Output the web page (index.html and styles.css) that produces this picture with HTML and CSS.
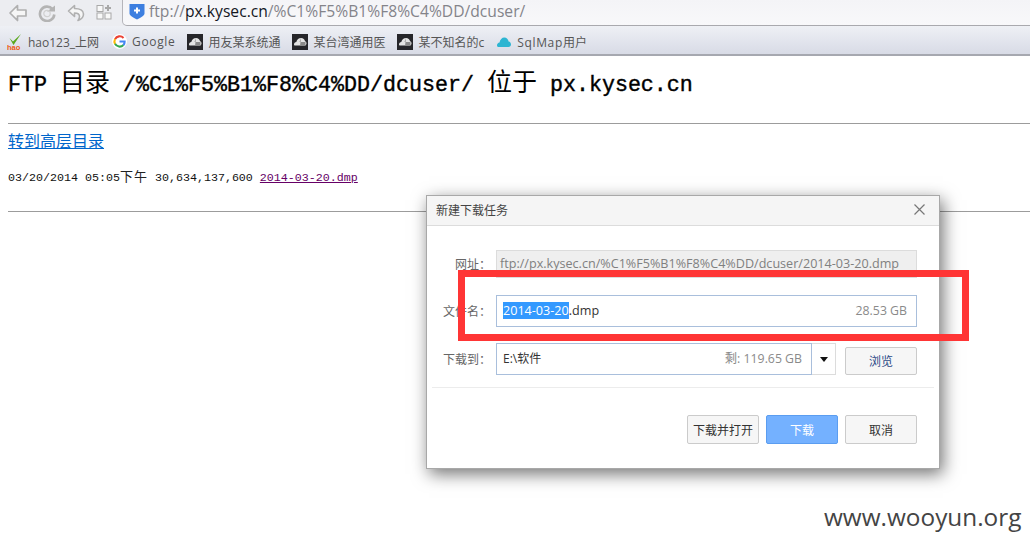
FILE: index.html
```html
<!DOCTYPE html>
<html lang="zh">
<head>
<meta charset="utf-8">
<title>FTP</title>
<link rel="stylesheet" href="styles.css">
</head>
<body>
<header class="chrome">
  <div class="toolbar">
    <div class="nav">
      <svg class="nav-icon" width="18" height="18" viewBox="0 0 18 18"><path d="M8.500 1.500 1 9l7.500 7.500V12H17V6H8.500z" fill="#f6f6f6" stroke="#b0b0b0" stroke-width="1.700" stroke-linejoin="round"/></svg>
      <svg class="nav-icon" width="18" height="18" viewBox="0 0 18 18"><path d="M14.500 5A7.200 7.200 0 1 0 16.300 10.500" fill="none" stroke="#b4b4b4" stroke-width="2.600"/><path d="M9 7.500h8V1.500z" fill="#b4b4b4"/><circle cx="9" cy="9.500" r="3.200" fill="none" stroke="#d0d0d0" stroke-width="1.200"/></svg>
      <svg class="nav-icon" width="18" height="18" viewBox="0 0 18 18"><path d="M7.500 1.500 1.500 7l6 5.500V9c3.500 0 5 1.500 5 3.500 0 1.500-.8 3-1.500 4 3-1 5.500-3.500 5.500-6.500 0-3.500-3.500-5.500-9-5.500z" fill="#f6f6f6" stroke="#b0b0b0" stroke-width="1.600" stroke-linejoin="round"/></svg>
      <svg class="nav-icon" width="16" height="16" viewBox="0 0 16 16"><rect x="1" y="1.500" width="6" height="6" fill="#f8f8f8" stroke="#a8a8a8"/><rect x="1" y="9" width="6" height="6" fill="#f8f8f8" stroke="#a8a8a8"/><rect x="9" y="9" width="6" height="6" fill="#f8f8f8" stroke="#a8a8a8"/><path d="M12 1v6M9 4h6" stroke="#a8a8a8" stroke-width="2"/></svg>
    </div>
    <div class="address">
      <svg width="16" height="17" viewBox="0 0 16 17"><path d="M.5 1h15v9.500c0 2-3.500 4.200-7.500 6-4-1.800-7.500-4-7.500-6z" fill="#3d7fe0"/><path d="M8 4.500v6M5 7.500h6" stroke="#fff" stroke-width="2"/></svg>
      <span class="url">ftp://<b>px.kysec.cn</b>/%C1%F5%B1%F8%C4%DD/dcuser/</span>
    </div>
  </div>
  <nav class="bookmarks">
    <span class="bm">
      <svg width="16" height="16" viewBox="0 0 16 16"><path d="M2.500 4 6 7.500 14 0 6.500 11z" fill="#5aa81e"/><text x="0" y="15.500" class="hao">hao</text></svg>
      hao123_上网</span>
    <span class="bm">
      <svg width="15" height="15" viewBox="0 0 16 16"><circle cx="8" cy="8" r="8" fill="#fff"/><path d="M12.300 4.200A5.700 5.700 0 0 0 3.200 5.500" fill="none" stroke="#ea4335" stroke-width="2.200"/><path d="M3.200 5.500a5.700 5.700 0 0 0 0 5" fill="none" stroke="#fbbc05" stroke-width="2.200"/><path d="M3.200 10.500a5.700 5.700 0 0 0 9 1.300" fill="none" stroke="#34a853" stroke-width="2.200"/><path d="M8 8h5.500a5.700 5.700 0 0 1-1.300 3.800" fill="none" stroke="#4285f4" stroke-width="2.200"/></svg>
      <span class="wide">Google</span></span>
    <span class="bm">
      <svg class="cloud" width="16" height="16" viewBox="0 0 16 16"><rect width="16" height="16" fill="#26262a"/><path d="M2 10.500c0-1.500 1-2.500 2.300-2.500C5 5.500 6.800 4 9 4c2.200 0 3.800 1.500 4 3.300 1 .3 1.500 1.200 1.500 2.200 0 1.100-.9 2-2 2H3c-.6 0-1-.4-1-1z" fill="#e4e4e4"/><path d="M9 4 7.500 8h6v4H8z" fill="#8a8a8a"/></svg>
      用友某系统通</span>
    <span class="bm">
      <svg class="cloud" width="16" height="16" viewBox="0 0 16 16"><rect width="16" height="16" fill="#26262a"/><path d="M2 10.500c0-1.500 1-2.500 2.300-2.500C5 5.500 6.800 4 9 4c2.200 0 3.800 1.500 4 3.300 1 .3 1.500 1.200 1.500 2.200 0 1.100-.9 2-2 2H3c-.6 0-1-.4-1-1z" fill="#e4e4e4"/><path d="M9 4 7.500 8h6v4H8z" fill="#8a8a8a"/></svg>
      某台湾通用医</span>
    <span class="bm">
      <svg class="cloud" width="16" height="16" viewBox="0 0 16 16"><rect width="16" height="16" fill="#26262a"/><path d="M2 10.500c0-1.500 1-2.500 2.300-2.500C5 5.500 6.800 4 9 4c2.200 0 3.800 1.500 4 3.300 1 .3 1.500 1.200 1.500 2.200 0 1.100-.9 2-2 2H3c-.6 0-1-.4-1-1z" fill="#e4e4e4"/><path d="M9 4 7.500 8h6v4H8z" fill="#8a8a8a"/></svg>
      某不知名的c</span>
    <span class="bm">
      <svg width="16" height="16" viewBox="0 0 16 16"><path d="M1 11.500c0-1.700 1.200-2.800 2.500-3C4 5.500 6 3.500 8.300 3.500c2.300 0 4 1.800 4.300 4 1.500.2 2.400 1.500 2.400 3 0 1.600-1.100 2.500-2.500 2.500H2.500C1.600 13 1 12.400 1 11.500z" fill="#2db5d2"/></svg>
      <span><span class="wide">SqlMap</span>用户</span></span>
  </nav>
</header>

<main class="page">
  <h1 class="title"><span class="lat">FTP </span>目录<span class="lat"> /%C1%F5%B1%F8%C4%DD/dcuser/ </span>位于<span class="lat"> px.kysec.cn</span></h1>
  <hr class="rule first">
  <a class="up" href="#">转到高层目录</a>
  <p class="entry"><span class="lat2">03/20/2014 05:05</span>下午<span class="lat2"> 30,634,137,600 </span><a class="file lat2" href="#">2014-03-20.dmp</a></p>
  <hr class="rule">
</main>

<section class="dialog">
  <div class="dlg-head">
    <span>新建下载任务</span>
    <svg width="11" height="11" viewBox="0 0 11 11"><path d="M.5.500l10 10M10.500.500l-10 10" stroke="#777" stroke-width="1.200"/></svg>
  </div>
  <div class="dlg-form">
    <div class="row url-row">
      <label>网址：</label>
      <div class="field disabled">ftp://px.kysec.cn/%C1%F5%B1%F8%C4%DD/dcuser/2014-03-20.dmp</div>
    </div>
    <div class="row name-row">
      <label>文件名：</label>
      <div class="field active"><span><span class="sel">2014-03-20</span>.dmp</span><span class="meta">28.53 GB</span></div>
    </div>
    <div class="row name-row to-row">
      <label>下载到：</label>
      <div class="field active path"><span>E:\软件</span><span class="meta">剩: 119.65 GB</span></div>
      <div class="drop"><i></i></div>
      <button class="btn browse" type="button">浏览</button>
    </div>
  </div>
  <div class="sep"></div>
  <div class="actions">
    <button class="btn" type="button">下载并打开</button>
    <button class="btn primary" type="button">下载</button>
    <button class="btn" type="button">取消</button>
  </div>
</section>

<div class="redbox"></div>
<div class="mark">www.wooyun.org</div>
</body>
</html>
```
FILE: styles.css
```css
* { box-sizing: border-box; }
html, body { margin: 0; padding: 0; }
body {
  width: 1030px;
  height: 547px;
  overflow: hidden;
  background: #fff;
  position: relative;
  font-family: "Noto Sans CJK SC", sans-serif;
}

.chrome { height: 56px; }
.toolbar {
  height: 26px;
  display: flex;
  background: #ecedf1;
}
.nav {
  width: 122px;
  padding: 4px 0 0 9px;
  display: flex;
  gap: 11px;
  align-items: flex-start;
}
.nav-icon { flex: none; }
.address {
  flex: 1;
  display: flex;
  align-items: center;
  gap: 4px;
  padding: 0 0 3px 6px;
  background: linear-gradient(#f4f4f7, #f8f8fa);
  border-left: 1px solid #b5b5ba;
  border-bottom: 1px solid #a9a9ae;
  border-bottom-left-radius: 5px;
}
.url {
  font-family: "Open Sans", sans-serif;
  font-size: 15.650px;
  color: #84848a;
  white-space: nowrap;
}
.url b { font-weight: 400; color: #14171f; }

.bookmarks {
  height: 30px;
  padding: 3px 0 0 7px;
  display: flex;
  align-items: center;
  gap: 12px;
  background: linear-gradient(#eef0f5, #d8dbe6);
  border-bottom: 2px solid #a6a8b0;
  font-family: "Open Sans", "Noto Sans CJK SC", sans-serif;
  font-size: 12px;
  color: #555;
}
.bm { display: flex; align-items: center; gap: 5px; white-space: nowrap; }
.bm:first-child { margin-right: 1px; }
.wide { letter-spacing: .65px; }
.hao { font: 700 7.500px "Liberation Sans", sans-serif; fill: #ee5a12; }

.page { padding: 0 0 0 8px; }
.title {
  margin: 0;
  padding-top: 8px;
  height: 67px;
  font: 400 25px/32px "Noto Sans CJK SC", serif;
  color: #000;
  white-space: pre;
}
.lat {
  font: 400 21.670px "Liberation Mono", monospace;
  -webkit-text-stroke: .4px #000;
}
.rule {
  margin: 0;
  width: 1022px;
  border: 0;
  border-top: 1px solid #9c9c9c;
  height: 1px;
}
.up {
  display: block;
  width: max-content;
  margin-top: 5px;
  font-size: 16px;
  line-height: 22px;
  color: #0066cc;
}
.entry {
  margin: 15px 0 0;
  height: 45px;
  font-size: 13px;
  letter-spacing: 1px;
  line-height: 20px;
  color: #222;
  white-space: pre;
}
.lat2 { font: 11.670px "Liberation Mono", monospace; letter-spacing: 0; color: #111; }
.file { color: #660066; }

.dialog {
  position: absolute;
  left: 426px;
  top: 195px;
  width: 514px;
  height: 274px;
  background: #fff;
  border: 1px solid #a8a8a8;
  box-shadow: 3px 5px 16px rgba(0, 0, 0, .55);
  display: flex;
  flex-direction: column;
}
.dlg-head {
  height: 30px;
  flex: none;
  padding: 0 14px 3px 9px;
  display: flex;
  align-items: center;
  justify-content: space-between;
  background: #f5f5f5;
  border-bottom: 1px solid #dcdcdc;
  font-size: 12px;
  color: #444;
}
.dlg-form { padding: 24px 22px 0 0; display: flex; flex-direction: column; gap: 16px; }
.row { display: flex; align-items: center; }
.url-row { height: 28px; margin-bottom: 1px; }
.name-row { height: 32px; }
.row label {
  width: 64px;
  margin-right: 5px;
  padding-bottom: 2px;
  text-align: right;
  flex: none;
  font-size: 12px;
  color: #666;
  white-space: nowrap;
}
.field {
  height: 100%;
  flex: 1;
  min-width: 0;
  padding: 0 9px 2px 6px;
  display: flex;
  align-items: center;
  justify-content: space-between;
  font-size: 12.600px;
  white-space: nowrap;
  color: #333;
  font-family: "Open Sans", "Noto Sans CJK SC", sans-serif;
}
.disabled {
  padding-left: 3px;
  background: #efefef;
  border: 1px solid #dcdcdc;
  color: #808080;
}
.active { border: 1px solid #a9bfdc; }
.sel { background: #3399ff; color: #fff; }
.meta { color: #8a8a8a; font-size: 12.300px; }
.path { flex: none; width: 316px; font-size: 12px; }
.drop {
  width: 24px;
  height: 100%;
  flex: none;
  border: 1px solid #dcdcdc;
  border-left: 0;
  display: flex;
  align-items: center;
  justify-content: center;
}
.drop i {
  border: 4px solid transparent;
  border-top: 5px solid #111;
  border-bottom: 0;
}
.btn {
  width: 72px;
  height: 29px;
  padding: 0;
  background: #f6f6f6;
  border: 1px solid #cbcbcb;
  border-radius: 2px;
  font: 12px "Noto Sans CJK SC", sans-serif;
  color: #333;
}
.browse { margin: 4px 0 0 9px; height: 28px; flex: none; color: #2b4a86; padding-bottom: 2px; }
.sep { margin: 12px 5px 0; height: 1px; background: #ececec; flex: none; }
.actions {
  margin-top: 27px;
  padding-right: 22px;
  display: flex;
  justify-content: flex-end;
  gap: 7px;
}
.primary { background: #74b1ff; border-color: #5b9df0; color: #fff; }

.redbox {
  position: absolute;
  left: 458px;
  top: 270px;
  width: 511px;
  height: 71px;
  border: 7px solid #ff3535;
}
.mark {
  position: absolute;
  left: 824px;
  top: 501px;
  font: 24.350px/32px "Open Sans", sans-serif;
  color: #444;
  white-space: nowrap;
}
```
